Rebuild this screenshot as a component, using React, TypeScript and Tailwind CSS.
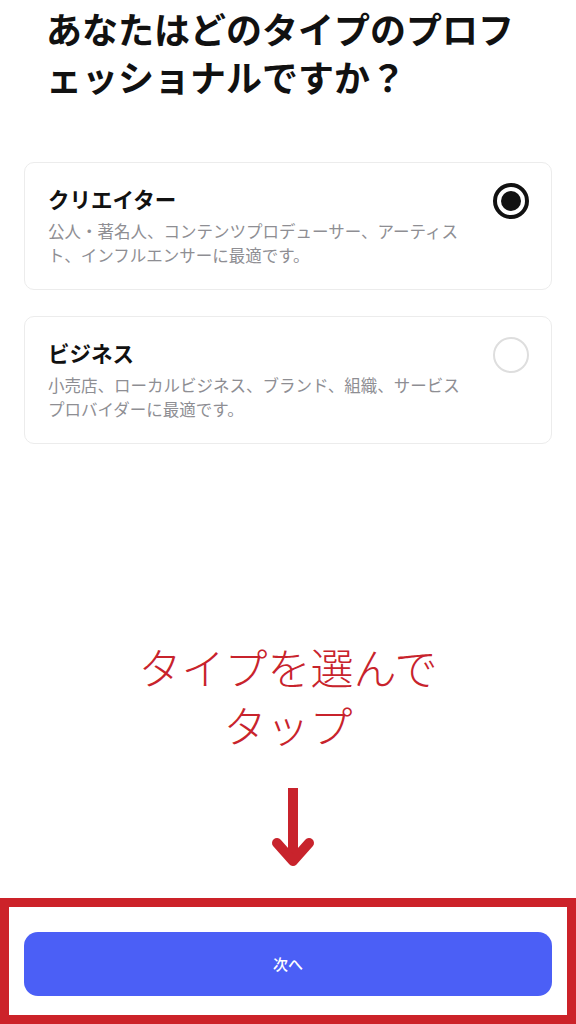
import React, { useState } from "react"

type Option = {
  id: string
  title: string
  lines: string[]
}

const options: Option[] = [
  {
    id: "creator",
    title: "クリエイター",
    lines: ["公人・著名人、コンテンツプロデューサー、アーティス", "ト、インフルエンサーに最適です。"],
  },
  {
    id: "business",
    title: "ビジネス",
    lines: ["小売店、ローカルビジネス、ブランド、組織、サービス", "プロバイダーに最適です。"],
  },
]

function Radio({ checked }: { checked: boolean }) {
  if (checked) {
    return (
      <div className="w-9 h-9 rounded-full border-[4px] border-[#111] flex items-center justify-center shrink-0">
        <div className="w-5 h-5 rounded-full bg-[#111]" />
      </div>
    )
  }
  return <div className="w-9 h-9 rounded-full border-2 border-[#dedede] shrink-0" />
}

export default function App() {
  const [selected, setSelected] = useState("creator")

  return (
    <div
      className="w-[576px] h-[1024px] bg-white flex flex-col overflow-hidden"
      style={{ fontFamily: '"Noto Sans CJK JP", "Noto Sans", sans-serif' }}
    >
      {/* Heading */}
      <h1 className="pt-[4px] px-[46px] text-[36px] leading-[48px] font-bold text-[#111]">
        あなたはどのタイプのプロフ
        <br />
        ェッショナルですか？
      </h1>

      {/* Options */}
      <div className="mt-[62px] px-[24px] flex flex-col gap-[26px]">
        {options.map((opt) => (
          <button
            key={opt.id}
            onClick={() => setSelected(opt.id)}
            className="w-full flex items-start text-left border border-[#ececec] rounded-[10px] pl-[23px] pr-[22px] pt-[22px] pb-[24px] h-[128px]"
          >
            <div className="flex-1">
              <div className="text-[21.5px] leading-[28px] font-bold text-[#111]">
                {opt.title}
              </div>
              <div className="mt-[6px] text-[16.5px] leading-[24px] text-[#8e8e93]">
                {opt.lines.map((l, i) => (
                  <div key={i}>{l}</div>
                ))}
              </div>
            </div>
            <div className="-mt-[2px]">
              <Radio checked={selected === opt.id} />
            </div>
          </button>
        ))}
      </div>

      {/* Annotation */}
      <div className="mt-[193px] text-center text-[43px] leading-[58px] font-light text-[#c8232c]">
        タイプを選んで
        <br />
        タップ
      </div>

      <div className="mt-[35px] flex justify-center pl-[10px]">
        <svg width="50" height="82" viewBox="0 0 50 82" fill="none">
          <line x1="25" y1="0" x2="25" y2="73" stroke="#c8232c" strokeWidth="10" />
          <polyline
            points="9,55 25,73 41,55"
            stroke="#c8232c"
            strokeWidth="10"
            strokeLinecap="round"
            strokeLinejoin="round"
          />
        </svg>
      </div>

      {/* Next button, highlighted */}
      <div className="mt-[28px] border-[9px] border-[#cc2229] px-[15px] pt-[25px] h-[126px]">
        <button className="w-full h-[64px] rounded-[14px] bg-[#4b5ff6] text-white text-[15px] font-medium">
          次へ
        </button>
      </div>
    </div>
  )
}
